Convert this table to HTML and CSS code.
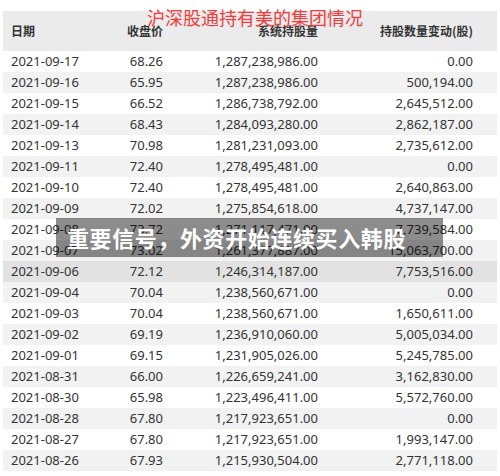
FILE: index.html
```html
<!DOCTYPE html>
<html lang="zh">
<head>
<meta charset="utf-8">
<link rel="stylesheet" href="styles.css">
</head>
<body>
<div class="page">
  <div class="title">沪深股通持有美的集团情况</div>
  <div class="table">
    <div class="row head">
      <div class="c date">日期</div>
      <div class="c num">收盘价</div>
      <div class="c num">系统持股量</div>
      <div class="c num">持股数量变动(股)</div>
      <div class="c"></div>
    </div>
    <div class="row"><div class="c date">2021-09-17</div><div class="c num">68.26</div><div class="c num">1,287,238,986.00</div><div class="c num">0.00</div><div class="c"></div></div>
    <div class="row alt"><div class="c date">2021-09-16</div><div class="c num">65.95</div><div class="c num">1,287,238,986.00</div><div class="c num">500,194.00</div><div class="c"></div></div>
    <div class="row"><div class="c date">2021-09-15</div><div class="c num">66.52</div><div class="c num">1,286,738,792.00</div><div class="c num">2,645,512.00</div><div class="c"></div></div>
    <div class="row alt"><div class="c date">2021-09-14</div><div class="c num">68.43</div><div class="c num">1,284,093,280.00</div><div class="c num">2,862,187.00</div><div class="c"></div></div>
    <div class="row"><div class="c date">2021-09-13</div><div class="c num">70.98</div><div class="c num">1,281,231,093.00</div><div class="c num">2,735,612.00</div><div class="c"></div></div>
    <div class="row alt"><div class="c date">2021-09-11</div><div class="c num">72.40</div><div class="c num">1,278,495,481.00</div><div class="c num">0.00</div><div class="c"></div></div>
    <div class="row"><div class="c date">2021-09-10</div><div class="c num">72.40</div><div class="c num">1,278,495,481.00</div><div class="c num">2,640,863.00</div><div class="c"></div></div>
    <div class="row alt"><div class="c date">2021-09-09</div><div class="c num">72.02</div><div class="c num">1,275,854,618.00</div><div class="c num">4,737,147.00</div><div class="c"></div></div>
    <div class="row"><div class="c date">2021-09-08</div><div class="c num">73.72</div><div class="c num">1,271,117,471.00</div><div class="c num">7,739,584.00</div><div class="c"></div></div>
    <div class="row alt"><div class="c date">2021-09-07</div><div class="c num">73.02</div><div class="c num">1,261,377,887.00</div><div class="c num">15,063,700.00</div><div class="c"></div></div>
    <div class="row sel"><div class="c date">2021-09-06</div><div class="c num">72.12</div><div class="c num">1,246,314,187.00</div><div class="c num">7,753,516.00</div><div class="c"></div></div>
    <div class="row alt"><div class="c date">2021-09-04</div><div class="c num">70.04</div><div class="c num">1,238,560,671.00</div><div class="c num">0.00</div><div class="c"></div></div>
    <div class="row"><div class="c date">2021-09-03</div><div class="c num">70.04</div><div class="c num">1,238,560,671.00</div><div class="c num">1,650,611.00</div><div class="c"></div></div>
    <div class="row alt"><div class="c date">2021-09-02</div><div class="c num">69.19</div><div class="c num">1,236,910,060.00</div><div class="c num">5,005,034.00</div><div class="c"></div></div>
    <div class="row"><div class="c date">2021-09-01</div><div class="c num">69.15</div><div class="c num">1,231,905,026.00</div><div class="c num">5,245,785.00</div><div class="c"></div></div>
    <div class="row alt"><div class="c date">2021-08-31</div><div class="c num">66.00</div><div class="c num">1,226,659,241.00</div><div class="c num">3,162,830.00</div><div class="c"></div></div>
    <div class="row"><div class="c date">2021-08-30</div><div class="c num">65.98</div><div class="c num">1,223,496,411.00</div><div class="c num">5,572,760.00</div><div class="c"></div></div>
    <div class="row alt"><div class="c date">2021-08-28</div><div class="c num">67.80</div><div class="c num">1,217,923,651.00</div><div class="c num">0.00</div><div class="c"></div></div>
    <div class="row"><div class="c date">2021-08-27</div><div class="c num">67.80</div><div class="c num">1,217,923,651.00</div><div class="c num">1,993,147.00</div><div class="c"></div></div>
    <div class="row alt"><div class="c date">2021-08-26</div><div class="c num">67.93</div><div class="c num">1,215,930,504.00</div><div class="c num">2,771,118.00</div><div class="c"></div></div>
  </div>
  <div class="banner">重要信号，外资开始连续买入韩股</div>
</div>
</body>
</html>
```

FILE: styles.css
```css
html, body {
  margin: 0;
  padding: 0;
  background: #ffffff;
}
.page {
  position: relative;
  width: 500px;
  height: 476px;
  padding: 11px 3px 0;
  box-sizing: border-box;
  font-family: "Noto Sans", "Noto Sans CJK SC", sans-serif;
  color: #333333;
}
.title {
  position: absolute;
  left: 0;
  right: 0;
  top: 4px;
  text-align: center;
  font-family: "Noto Sans CJK SC", sans-serif;
  font-size: 18px;
  line-height: 26px;
  color: #f23c3c;
  padding-left: 10px;
}
.table {
  width: 494px;
}
.row {
  display: grid;
  grid-template-columns: 97px 63px 155px 155px 24px;
  height: 21px;
  align-items: center;
  font-size: 13px;
  line-height: 21px;
}
.row.alt {
  background: #f2f2f2;
}
.row.sel {
  background: #e2e2e2;
}
.row.head {
  height: 40px;
  background: #ebebeb;
  font-family: "Noto Sans CJK SC", sans-serif;
  font-weight: 700;
  font-size: 12px;
  line-height: 40px;
  color: #333333;
}
.c.date {
  padding-left: 8px;
  text-align: left;
  white-space: nowrap;
}
.c.num {
  text-align: right;
  white-space: nowrap;
}
.banner {
  position: absolute;
  left: 56px;
  top: 218px;
  width: 387px;
  height: 39px;
  box-sizing: border-box;
  padding-left: 11px;
  background: rgba(0, 0, 0, 0.45);
  color: #ffffff;
  font-family: "Noto Sans CJK SC", sans-serif;
  font-weight: 700;
  font-size: 22px;
  line-height: 39px;
  letter-spacing: 0.6px;
  white-space: nowrap;
}
```
